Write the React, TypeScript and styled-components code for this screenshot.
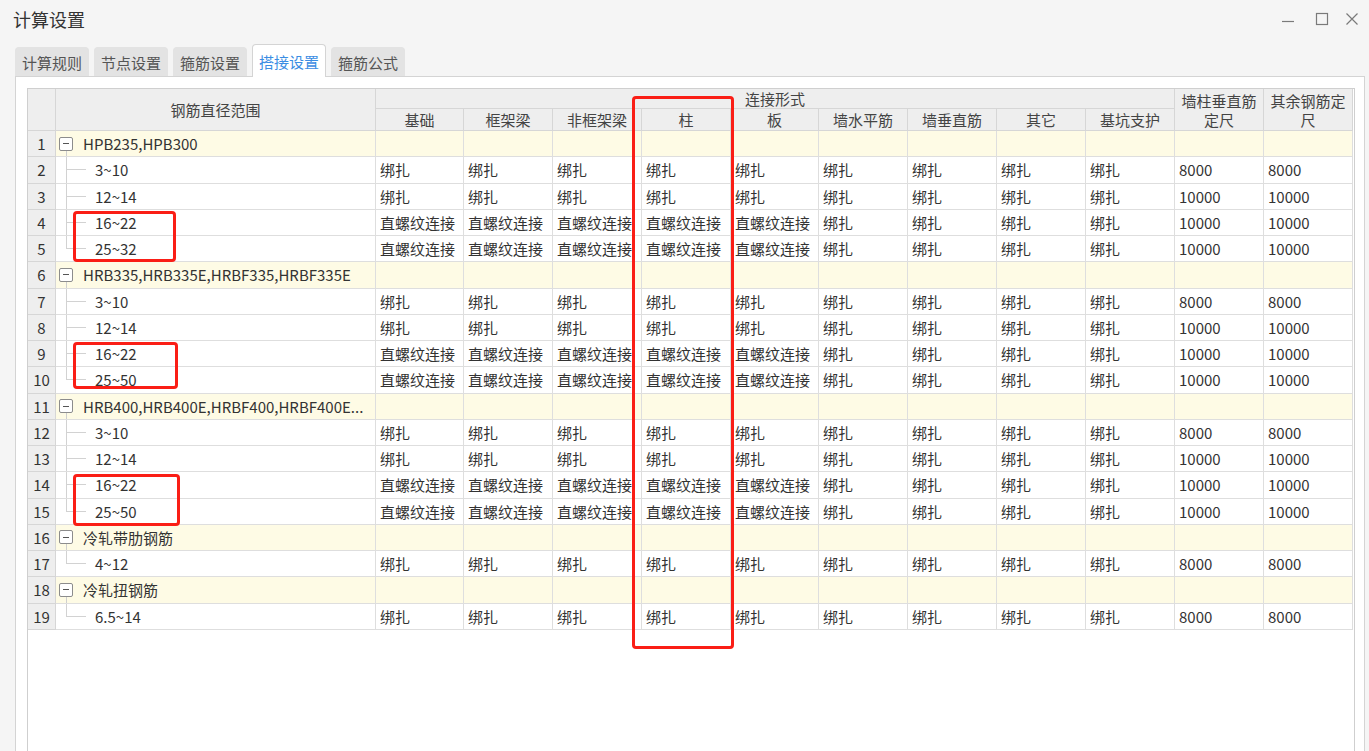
import React from "react";
import styled, { createGlobalStyle } from "styled-components";

const GlobalStyle = createGlobalStyle`
  html, body {
    margin: 0;
    padding: 0;
  }
  body {
    font-family: "Noto Sans CJK SC", "Noto Sans", sans-serif;
    color: #333;
    background: #f5f5f5;
  }
`;

type Row =
  | { kind: "group"; name: string }
  | { kind: "item"; name: string; last: boolean; cells: string[] };

const BIND = "绑扎";
const THREAD = "直螺纹连接";

const item = (name: string, threaded: boolean, len: string, last = false): Row => ({
  kind: "item",
  name,
  last,
  cells: [
    ...Array(5).fill(threaded ? THREAD : BIND),
    ...Array(4).fill(BIND),
    len,
    len,
  ],
});

const rows: Row[] = [
  { kind: "group", name: "HPB235,HPB300" },
  item("3~10", false, "8000"),
  item("12~14", false, "10000"),
  item("16~22", true, "10000"),
  item("25~32", true, "10000", true),
  { kind: "group", name: "HRB335,HRB335E,HRBF335,HRBF335E" },
  item("3~10", false, "8000"),
  item("12~14", false, "10000"),
  item("16~22", true, "10000"),
  item("25~50", true, "10000", true),
  { kind: "group", name: "HRB400,HRB400E,HRBF400,HRBF400E..." },
  item("3~10", false, "8000"),
  item("12~14", false, "10000"),
  item("16~22", true, "10000"),
  item("25~50", true, "10000", true),
  { kind: "group", name: "冷轧带肋钢筋" },
  item("4~12", false, "8000", true),
  { kind: "group", name: "冷轧扭钢筋" },
  item("6.5~14", false, "8000", true),
];

const colWidths = [28, 320, 88, 89, 89, 89, 88, 89, 89, 89, 89, 89, 89];
const subHeads = ["基础", "框架梁", "非框架梁", "柱", "板", "墙水平筋", "墙垂直筋", "其它", "基坑支护"];
const tabs = ["计算规则", "节点设置", "箍筋设置", "搭接设置", "箍筋公式"];

// red highlight frames drawn over the grid
const marks = [
  { x: 632, y: 96, w: 102, h: 553 },
  { x: 73, y: 211, w: 103, h: 51 },
  { x: 73, y: 342, w: 105, h: 47 },
  { x: 73, y: 474, w: 107, h: 52 },
];

const Window = styled.div`
  position: relative;
  height: 100vh;
  display: flex;
  flex-direction: column;
  overflow: hidden;
  background: #f5f5f5;
`;

const TitleBar = styled.div`
  height: 40px;
  flex: none;
  display: flex;
  align-items: center;
  justify-content: space-between;
  padding: 0 10px 3px 13px;
  box-sizing: border-box;
`;

const Title = styled.div`
  font-size: 18px;
  color: #333;
`;

const Controls = styled.div`
  display: flex;
  align-items: center;
  gap: 16px;
  color: #7a7a7a;

  & > svg:first-child {
    margin-right: 4px;
  }
`;

const Body = styled.div`
  flex: 1;
  display: flex;
  flex-direction: column;
  padding: 3px 4px 0 15px;
  min-height: 0;
`;

const TabStrip = styled.div`
  display: flex;
  align-items: flex-end;
  gap: 5px;
  height: 33px;
  position: relative;
  z-index: 1;
`;

const Tab = styled.div<{ $active?: boolean }>`
  width: 74px;
  height: ${(p) => (p.$active ? "33px" : "29px")};
  box-sizing: border-box;
  display: flex;
  align-items: center;
  justify-content: center;
  font-size: 15px;
  white-space: nowrap;
  border-radius: 4px 4px 0 0;
  color: ${(p) => (p.$active ? "#3b8de3" : "#555")};
  background: ${(p) => (p.$active ? "#fff" : "#e3e3e3")};
  border: 1px solid ${(p) => (p.$active ? "#d4d4d4" : "#e3e3e3")};
  border-bottom: none;
  margin-bottom: ${(p) => (p.$active ? "-1px" : "0")};
`;

const Panel = styled.div`
  flex: 1;
  background: #fff;
  border: 1px solid #d4d4d4;
  border-bottom: none;
  padding: 11px 9px 0 11px;
  display: flex;
  flex-direction: column;
  min-height: 0;
`;

const GridBox = styled.div`
  flex: 1;
  border: 1px solid #cfcfcf;
  border-bottom: none;
  background: #fff;
  overflow: hidden;
`;

const Table = styled.table`
  border-collapse: separate;
  border-spacing: 0;
  table-layout: fixed;
  width: 1325px;
  font-size: 15px;
`;

const HeadRow = styled.tr<{ $h: number }>`
  height: ${(p) => p.$h}px;
`;

const HeadCell = styled.th`
  background: #eeeeee;
  color: #444;
  font-weight: normal;
  text-align: center;
  padding: 0 2px;
  line-height: 19px;
  border-right: 1px solid #d6d6d6;
  border-bottom: 1px solid #d6d6d6;
  white-space: nowrap;
  overflow: hidden;
  box-sizing: border-box;
`;

const BodyRow = styled.tr`
  height: 26.26px;
`;

const NumCell = styled.td`
  background: #eeeeee;
  color: #333;
  text-align: center;
  padding: 0;
  border-right: 1px solid #d6d6d6;
  border-bottom: 1px solid #d6d6d6;
  box-sizing: border-box;
`;

const Cell = styled.td<{ $group?: boolean }>`
  background: ${(p) => (p.$group ? "#fefbe5" : "#fff")};
  color: #333;
  padding: 0 0 0 4px;
  border-right: 1px solid #dedede;
  border-bottom: 1px solid #dedede;
  white-space: nowrap;
  overflow: hidden;
  box-sizing: border-box;
`;

const NameCell = styled(Cell)`
  padding: 0;
  height: 26.26px;
`;

const NameInner = styled.div<{ $group?: boolean }>`
  display: flex;
  align-items: center;
  height: 100%;
  padding-left: ${(p) => (p.$group ? "3px" : "10px")};
  background: ${(p) =>
    p.$group
      ? "linear-gradient(#cfcfcf, #cfcfcf) 10px 100% / 1px 6px no-repeat"
      : "none"};
`;

const Guide = styled.span<{ $last: boolean }>`
  width: 20px;
  align-self: stretch;
  margin-right: 9px;
  background:
    linear-gradient(#d2d2d2, #d2d2d2) left top / 1px ${(p) => (p.$last ? "50%" : "100%")} no-repeat,
    linear-gradient(#d2d2d2, #d2d2d2) left center / 100% 1px no-repeat;
`;

const Toggle = styled.span`
  flex: none;
  width: 14px;
  height: 14px;
  box-sizing: border-box;
  border: 1px solid #8c8c8c;
  border-radius: 2px;
  margin-right: 10px;
  background: linear-gradient(#555, #555) center / 6px 1px no-repeat, #fff;
`;

const Mark = styled.div<{ $x: number; $y: number; $w: number; $h: number }>`
  position: absolute;
  left: ${(p) => p.$x}px;
  top: ${(p) => p.$y}px;
  width: ${(p) => p.$w}px;
  height: ${(p) => p.$h}px;
  box-sizing: border-box;
  border: 3px solid #fa1e16;
  border-radius: 4px;
  pointer-events: none;
`;

const MinIcon = () => (
  <svg width="14" height="14" viewBox="0 0 14 14">
    <path d="M1 9.5h12" stroke="currentColor" strokeWidth="1.2" />
  </svg>
);

const MaxIcon = () => (
  <svg width="14" height="14" viewBox="0 0 14 14">
    <rect x="1.5" y="1.5" width="11" height="11" fill="none" stroke="currentColor" strokeWidth="1.2" />
  </svg>
);

const CloseIcon = () => (
  <svg width="14" height="14" viewBox="0 0 14 14">
    <path d="M1.5 1.5l11 11M12.5 1.5l-11 11" stroke="currentColor" strokeWidth="1.2" />
  </svg>
);

const App = () => {
  return (
    <Window>
      <GlobalStyle />
      <TitleBar>
        <Title>计算设置</Title>
        <Controls>
          <MinIcon />
          <MaxIcon />
          <CloseIcon />
        </Controls>
      </TitleBar>
      <Body>
        <TabStrip>
          {tabs.map((t) => (
            <Tab key={t} $active={t === "搭接设置"}>
              {t}
            </Tab>
          ))}
        </TabStrip>
        <Panel>
          <GridBox>
            <Table>
              <colgroup>
                {colWidths.map((w, i) => (
                  <col key={i} style={{ width: w }} />
                ))}
              </colgroup>
              <thead>
                <HeadRow $h={20}>
                  <HeadCell rowSpan={2} />
                  <HeadCell rowSpan={2}>钢筋直径范围</HeadCell>
                  <HeadCell colSpan={9}>连接形式</HeadCell>
                  <HeadCell rowSpan={2}>
                    墙柱垂直筋
                    <br />
                    定尺
                  </HeadCell>
                  <HeadCell rowSpan={2}>
                    其余钢筋定
                    <br />
                    尺
                  </HeadCell>
                </HeadRow>
                <HeadRow $h={22}>
                  {subHeads.map((h) => (
                    <HeadCell key={h}>{h}</HeadCell>
                  ))}
                </HeadRow>
              </thead>
              <tbody>
                {rows.map((r, i) =>
                  r.kind === "group" ? (
                    <BodyRow key={i}>
                      <NumCell>{i + 1}</NumCell>
                      <NameCell $group>
                        <NameInner $group>
                          <Toggle />
                          {r.name}
                        </NameInner>
                      </NameCell>
                      {Array.from({ length: 11 }).map((_, j) => (
                        <Cell key={j} $group />
                      ))}
                    </BodyRow>
                  ) : (
                    <BodyRow key={i}>
                      <NumCell>{i + 1}</NumCell>
                      <NameCell>
                        <NameInner>
                          <Guide $last={r.last} />
                          {r.name}
                        </NameInner>
                      </NameCell>
                      {r.cells.map((c, j) => (
                        <Cell key={j}>{c}</Cell>
                      ))}
                    </BodyRow>
                  )
                )}
              </tbody>
            </Table>
          </GridBox>
        </Panel>
      </Body>
      {marks.map((m, i) => (
        <Mark key={i} $x={m.x} $y={m.y} $w={m.w} $h={m.h} />
      ))}
    </Window>
  );
};

export default App;
